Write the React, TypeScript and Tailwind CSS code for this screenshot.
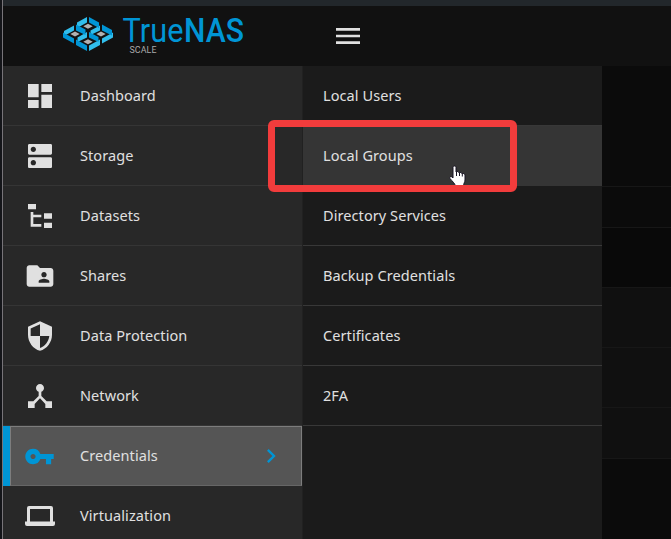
import React from 'react';
import {
  MdDashboard, MdDns, MdFolderShared, MdSecurity, MdDeviceHub, MdVpnKey, MdMenu, MdChevronRight,
} from 'react-icons/md';

const FileTree = () => (
  <svg viewBox="0 0 24 24" className="size-8" fill="currentColor">
    <path d="M3 3h6v4H3zM15 10h6v4h-6zM15 17h6v4h-6zM13 13H7v5h6v2H5V9h2v2h6z" />
  </svg>
);

const Laptop = () => (
  <svg viewBox="0 0 32 32" className="size-8" fill="currentColor" fillRule="evenodd">
    <path d="M5 6h22a2 2 0 0 1 2 2v13.500h2V24a2 2 0 0 1-2 2H3a2 2 0 0 1-2-2v-2.500h2V8a2 2 0 0 1 2-2zM6 9v12.500h20V9z" />
  </svg>
);

const items = [
  { label: 'Dashboard', icon: <MdDashboard size={32} /> },
  { label: 'Storage', icon: <MdDns size={32} /> },
  { label: 'Datasets', icon: <FileTree /> },
  { label: 'Shares', icon: <MdFolderShared size={32} /> },
  { label: 'Data Protection', icon: <MdSecurity size={32} /> },
  { label: 'Network', icon: <MdDeviceHub size={32} /> },
  { label: 'Credentials', icon: <MdVpnKey size={31} /> },
  { label: 'Virtualization', icon: <Laptop /> },
];

const submenu = ['Local Users', 'Local Groups', 'Directory Services', 'Backup Credentials', 'Certificates', '2FA'];

const Logo = () => (
  <svg width="190" height="44" viewBox="60 13 190 44" role="img">
    <g fill="#31beec">
      <path d="M77 22.500 87 17v5.500L77 28zM64 31l10-5.500v5L64 36zM90.500 30.500l9.500-5v5L90.500 35zM77.500 37.500l9.500-5.500v5.500l-9.500 4.500z" />
      <path d="M89 45.500l11-6V45l-11 6zM102 38.500l11-6v5l-11 6z" />
    </g>
    <g fill="#0095d5">
      <path d="M89 17l10 5.500V28l-10-5.500zM76 24.500l9.500 5V35L76 30.500zM102 24.500l10 5.500v5.500l-10-5zM89 32l9.500 5v5L89 37.500z" />
      <path d="M63 32.500l11 6v5l-11-6zM76 39.500l11 6V51l-11-6z" />
    </g>
    <g fill="#b1b1b1">
      <path d="m88 23.800 4.700 2.500-4.700 2.500-4.700-2.500zM75 31.500l4.700 2.500-4.700 2.500-4.700-2.500zM101 31.500l4.700 2.500-4.700 2.500-4.700-2.500zM88 39.200l4.700 2.500-4.700 2.500-4.700-2.500z" />
    </g>
    <g fill="#0095d5" fontFamily="Roboto, sans-serif" fontSize="32.500">
      <text x="122.500" y="42.300" textLength="61" lengthAdjust="spacingAndGlyphs">True</text>
      <text x="184" y="42.300" fontWeight="500" textLength="60" lengthAdjust="spacingAndGlyphs">NAS</text>
    </g>
    <text x="129.500" y="52.800" fill="#aaa" fontFamily="Roboto, sans-serif" fontSize="8.500" textLength="27" lengthAdjust="spacingAndGlyphs">SCALE</text>
  </svg>
);

const backdrop = [
  'h-[121px] bg-[#0b0b0b]',
  'h-[41px] bg-[#0b0b0b]',
  'h-[60px] bg-[#090909]',
  'h-[60px] bg-[#101010]',
  'h-[60px] bg-[#101010]',
  'h-[51px] bg-[#101010]',
];

export default function App() {
  return (
    <div className="relative flex h-[539px] w-[671px] overflow-hidden bg-[#111] font-['Noto_Sans',sans-serif] text-[14.5px] tracking-[0.08px] text-[#e0e0e0]">
      <div className="w-[3px] shrink-0 border-r border-[#777479] bg-[#141519]" />
      <div className="flex min-w-0 flex-1 flex-col">
        <div className="h-1.5 shrink-0 bg-[#22272b]" />
        <header className="flex h-[60px] shrink-0 pl-[57px]">
          <div className="w-[272px] pt-[7px]"><Logo /></div>
          <MdMenu size={32} className="mt-3.5" />
        </header>
        <div className="flex min-h-0 flex-1">
          <nav className="w-[299px] shrink-0 overflow-hidden bg-[#282828]">
            {items.map(({ label, icon }) => {
              const active = label === 'Credentials';
              return (
                <div
                  key={label}
                  className={
                    active
                      ? 'flex h-[60px] border-l-[7px] border-[#0095d5] bg-[#555]'
                      : 'flex h-[60px] items-center border-b border-[#353535] pl-[21px]'
                  }
                >
                  {active ? (
                    <div className="flex flex-1 items-center border border-[#7d7d7d] border-b-[#666] pl-[13px]">
                      <span className="w-14 text-[#0095d5]">{icon}</span>
                      <span className="flex-1">{label}</span>
                      <MdChevronRight size={28} className="mr-4 text-[#0095d5]" />
                    </div>
                  ) : (
                    <>
                      <span className="w-14">{icon}</span>
                      <span>{label}</span>
                    </>
                  )}
                </div>
              );
            })}
          </nav>
          <div className="w-[300px] shrink-0 border-l border-[#212121] bg-[#1b1b1b]">
            {submenu.map((label) => (
              <div
                key={label}
                className={
                  label === 'Local Groups'
                    ? 'flex h-[60px] items-center border-b border-[#353535] bg-[#353535] pl-5'
                    : 'flex h-[60px] items-center border-b border-[#383838] pl-5'
                }
              >
                {label}
              </div>
            ))}
          </div>
          <div className="flex flex-1 flex-col bg-[#0b0b0b]">
            {backdrop.map((style, i) => (
              <div key={i} className={`shrink-0 border-b border-[#171717] ${style}`} />
            ))}
          </div>
        </div>
      </div>
      <svg className="absolute left-[448px] top-[165px]" width="19" height="23" viewBox="0 0 19 23">
        <path
          d="M5 2.500C5 .5 8 .5 8 2.500V7c1-1 3-.5 3 .8 1-.8 3-.3 3 1 1-.7 3-.3 3 1.200v5c0 2-1.500 3.500-1.500 6h-8C7 18.500 4 16 2 13.500c-1-1.300.8-2.500 2-1.500l1 1z"
          fill="#fff" stroke="#171322" strokeWidth="1"
        />
        <path d="M8.500 7v4M11.500 8v3M14.300 9v2.500" stroke="#171322" strokeWidth="1" />
      </svg>
      <div className="absolute left-[268px] top-[120px] h-[71.500px] w-[249px] rounded-md border-[7px] border-[#f23c3c]" />
    </div>
  );
}
